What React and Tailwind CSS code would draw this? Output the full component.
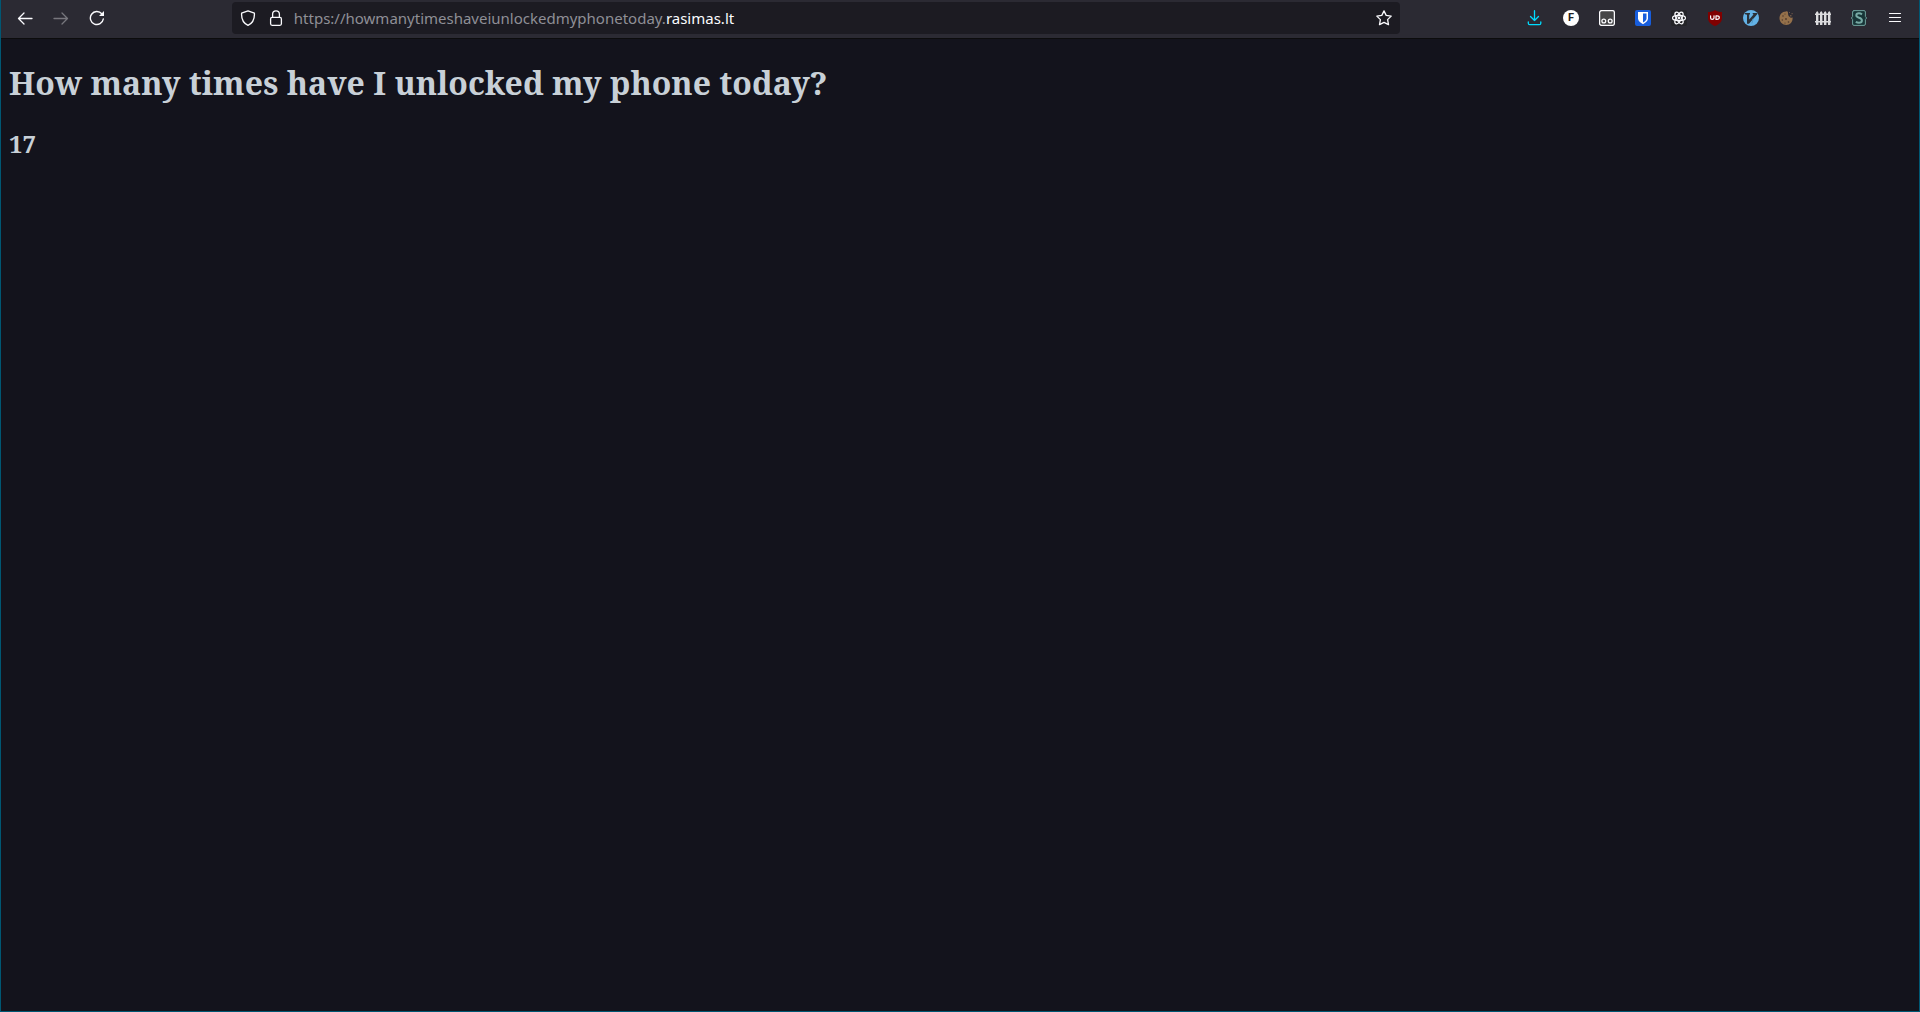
function Icon({ children, size = 16, box = '0 0 16 16', className = '' }) {
  return (
    <svg
      width={size}
      height={size}
      viewBox={box}
      fill="none"
      stroke="currentColor"
      strokeWidth="1.3"
      strokeLinecap="round"
      strokeLinejoin="round"
      aria-hidden="true"
      className={className}
    >
      {children}
    </svg>
  );
}

function ToolButton({ label, children, disabled = false }) {
  return (
    <button
      type="button"
      aria-label={label}
      disabled={disabled}
      className="flex h-8 w-9 shrink-0 items-center justify-center text-[#fbfbfe] disabled:text-[#77767d]"
    >
      {children}
    </button>
  );
}

function Navigation() {
  return (
    <nav className="flex" aria-label="History">
      <ToolButton label="Back">
        <Icon>
          <path d="M15 8.5H1.5M7 3L1.5 8.5L7 14" />
        </Icon>
      </ToolButton>
      <ToolButton label="Forward" disabled>
        <Icon>
          <path d="M1 8.5h13.5M9 3l5.500 5.500L9 14" />
        </Icon>
      </ToolButton>
      <ToolButton label="Reload">
        <Icon>
          <path d="M12.800 3.800A6.500 6.500 0 1 0 14.300 9" strokeWidth="1.4" />
          <path d="M15 1v5h-5z" fill="currentColor" stroke="none" />
        </Icon>
      </ToolButton>
    </nav>
  );
}

function AddressBar() {
  return (
    <div className="flex h-8 min-w-0 flex-[10_1_0%] items-center rounded-sm bg-[#1c1b22] text-[#fbfbfe]">
      <button type="button" aria-label="Tracking protection" className="flex h-8 w-8 shrink-0 items-center justify-center">
        <Icon>
          <path d="M8 .8L14.400 3.200C14.700 8.500 13 13 8 15.400C3 13 1.300 8.500 1.600 3.200Z" />
        </Icon>
      </button>
      <button type="button" aria-label="Connection secure" className="flex h-8 w-6 shrink-0 items-center justify-center">
        <Icon>
          <rect x="2.600" y="7.400" width="10.800" height="7.900" rx="1.500" />
          <path d="M4.600 7.400V4.200a3.400 3.400 0 0 1 6.800 0v3.200" />
        </Icon>
      </button>
      <a
        href="#top"
        className="ml-1.5 min-w-0 flex-1 truncate font-['Noto_Sans',sans-serif] text-[15px] leading-8 text-[#8f8f96]"
      >
        https://howmanytimeshaveiunlockedmyphonetoday.<span className="text-[#fbfbfe]">rasimas.lt</span>
      </a>
      <button type="button" aria-label="Bookmark this page" className="flex h-8 w-8 shrink-0 items-center justify-center">
        <Icon>
          <path d="M8 .9l2.200 4.500 5 .7-3.600 3.500.9 5L8 12.300l-4.500 2.300.9-5L.8 6.100l5-.7z" />
        </Icon>
      </button>
    </div>
  );
}

function Extensions() {
  return (
    <div className="flex">
      <ToolButton label="Downloads">
        <Icon className="text-[#00ddff]">
          <path d="M7.500 .7v9.800M3.500 6.500l4 4 4-4M1.300 12v1.200q0 1.500 1.500 1.500h9.500q1.500 0 1.500-1.500V12" />
        </Icon>
      </ToolButton>
      <ToolButton label="Font extension">
        <span className="flex size-4 items-center justify-center rounded-full bg-white font-['Roboto',sans-serif] text-[11px] leading-4 font-bold text-[#222222]">
          F
        </span>
      </ToolButton>
      <ToolButton label="Userscripts">
        <Icon>
          <rect x=".6" y=".6" width="14.800" height="14.800" rx="2" fill="#454547" />
          <circle cx="4.800" cy="11" r="1.900" />
          <circle cx="11.200" cy="11" r="1.900" />
        </Icon>
      </ToolButton>
      <ToolButton label="Password manager">
        <Icon>
          <rect width="16" height="16" rx="2" fill="#175ddc" stroke="none" />
          <path d="M3 2h10v6.500c0 2.500-2.500 4.300-5 5.700c-2.500-1.400-5-3.200-5-5.700z" fill="#fff" stroke="none" />
          <path d="M8 3.500h3.500v5c0 1.600-1.700 2.900-3.500 4z" fill="#175ddc" stroke="none" />
        </Icon>
      </ToolButton>
      <ToolButton label="React tools">
        <Icon>
          <rect width="16" height="16" rx="2" fill="#242428" stroke="none" />
          <g strokeWidth="1.200">
            <ellipse cx="8" cy="8" rx="6.500" ry="2.600" />
            <ellipse cx="8" cy="8" rx="6.500" ry="2.600" transform="rotate(60 8 8)" />
            <ellipse cx="8" cy="8" rx="6.500" ry="2.600" transform="rotate(120 8 8)" />
          </g>
          <circle cx="8" cy="8" r="1.400" fill="currentColor" stroke="none" />
        </Icon>
      </ToolButton>
      <ToolButton label="Content blocker">
        <Icon>
          <path d="M8 0c2 1.500 4 2 7 2v6c0 4-3 6.500-7 8c-4-1.500-7-4-7-8V2c3 0 5-.5 7-2z" fill="#800000" stroke="none" />
          <path d="M3.600 5.800v2.300q0 1.300 1.600 1.300T7 8.100V5.800M9 5.800h1q2.300 0 2.300 1.800t-2.300 1.800H9z" strokeWidth="1.200" />
        </Icon>
      </ToolButton>
      <ToolButton label="Vim keys">
        <Icon>
          <circle cx="8" cy="8" r="8" fill="#63b2e6" stroke="none" />
          <path d="M2 3h5v1.300l-.8.500v4.700L10.500 4.500 9.700 4V3h4.500v1.300L6 13.700H4V4.800L2 4.300z" fill="#2b3138" stroke="none" />
          <path d="M10 9l-1 4" stroke="#5298c3" strokeWidth="1" />
        </Icon>
      </ToolButton>
      <ToolButton label="Cookie cleaner">
        <Icon>
          <path d="M7 1.500C8 1 9 1.500 9 3c0 1.500 .3 2 .8 3.200c.8 0 1.200 2 2.700 1.500C13 7.500 13.200 7.500 13.600 7.500C14 12 11 15 7.300 15S.5 12 .5 8.300S3 1.500 7 1.500z" fill="#94704a" stroke="none" />
          <g fill="#4e3a2c" stroke="none">
            <circle cx="4" cy="6" r=".8" />
            <circle cx="7" cy="9" r=".9" />
            <circle cx="3.300" cy="10" r=".7" />
            <circle cx="9.500" cy="12" r=".8" />
            <circle cx="6" cy="4" r=".6" />
            <circle cx="6" cy="13" r=".6" />
          </g>
          <g fill="#6b5547" stroke="none">
            <rect x="11" y="5" width="1.500" height="1.500" />
            <rect x="12.500" y="3" width="1.200" height="1.200" />
            <rect x="10" y="2" width="1" height="1" />
          </g>
        </Icon>
      </ToolButton>
      <ToolButton label="Containers">
        <Icon>
          <g fill="#dcdcde" stroke="none">
            <path d="M1 2.500L2.200 1l1.200 1.500V15H1zM5 2.500L6.200 1l1.200 1.500V15H5zM9 2.500L10.200 1l1.200 1.500V15H9zM13 2.500L14.200 1l1.200 1.500V15H13z" />
            <path d="M0 3.500h16v1.500H0zM0 11h16v1.500H0z" />
          </g>
        </Icon>
      </ToolButton>
      <ToolButton label="Style editor">
        <Icon>
          <path d="M3 .6h10q1.400 0 1.400 1.400v4.500L15.600 8l-1.200 1.500V14q0 1.400-1.400 1.400H3q-1.400 0-1.400-1.400V9.500L.4 8l1.200-1.500V2Q1.600.6 3 .6z" fill="#173537" stroke="#6fa09c" strokeWidth="1" />
          <path d="M11 4.300Q9.500 3.300 8 3.300Q5.300 3.300 5.300 5.300Q5.300 7 8 7.800Q10.900 8.600 10.900 10.600Q10.900 12.800 8 12.800Q6.300 12.800 4.800 11.900" stroke="#77aaa5" strokeWidth="2" strokeLinecap="butt" />
        </Icon>
      </ToolButton>
      <ToolButton label="Application menu">
        <Icon>
          <path d="M2.500 3.500h11M2.500 7.500h11M2.500 11.500h11" strokeWidth="1.200" />
        </Icon>
      </ToolButton>
    </div>
  );
}

export default function App() {
  return (
    <div id="top" className="flex min-h-screen flex-col border-x border-b border-[#005773] bg-[#13131c]">
      <header className="flex h-[39px] items-center border-b border-[#0c0c0d] bg-[#2b2a33] px-1.5 pb-0.5">
        <Navigation />
        <div className="flex-1" />
        <AddressBar />
        <div className="flex-1" />
        <Extensions />
      </header>
      <main className="flex flex-1 flex-col gap-[23px] px-2 pt-[22px] font-['Noto_Serif','DejaVu_Serif',serif] font-bold text-[#c8d0d7]">
        <h1 className="text-[32px] leading-11">How many times have I unlocked my phone today?</h1>
        <h2 className="text-2xl leading-8">17</h2>
      </main>
    </div>
  );
}
